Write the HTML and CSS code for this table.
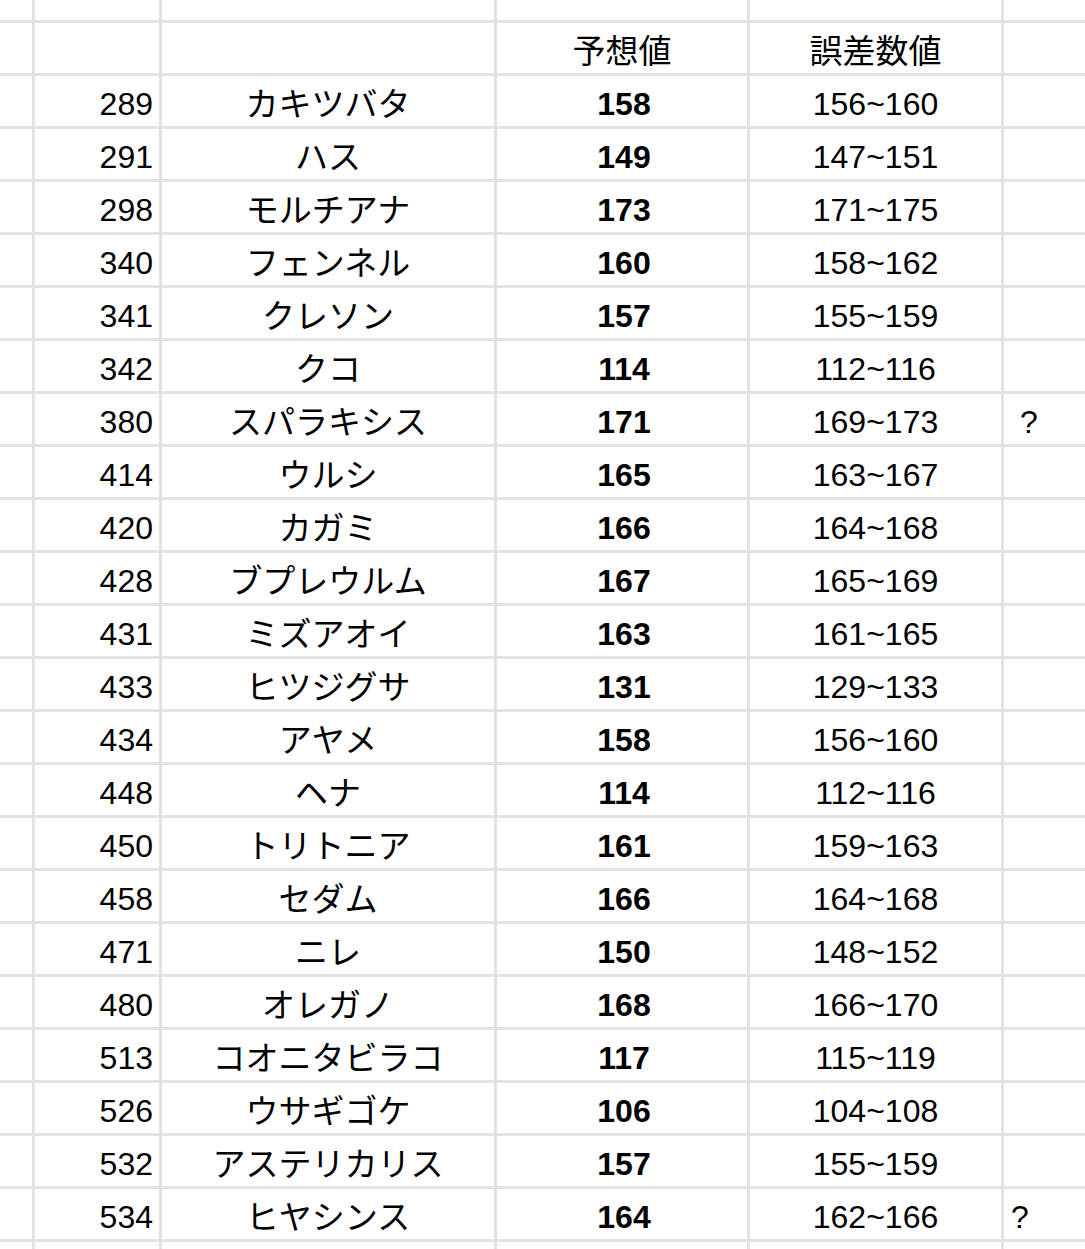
FILE: index.html
```html
<!DOCTYPE html>
<html lang="ja">
<head>
<meta charset="utf-8">
<title>予想値</title>
<link rel="stylesheet" href="styles.css">
</head>
<body>
<div class="sheet">
  <div class="c top"></div><div class="c top"></div><div class="c top"></div><div class="c top"></div><div class="c top"></div><div class="c top"></div>

  <div class="c"></div><div class="c"></div><div class="c"></div>
  <div class="c mid jp">予想値</div><div class="c mid jp">誤差数値</div><div class="c"></div>

  <div class="c"></div><div class="c num">289</div><div class="c mid jp">カキツバタ</div><div class="c mid b">158</div><div class="c mid">156~160</div><div class="c"></div>
  <div class="c"></div><div class="c num">291</div><div class="c mid jp">ハス</div><div class="c mid b">149</div><div class="c mid">147~151</div><div class="c"></div>
  <div class="c"></div><div class="c num">298</div><div class="c mid jp">モルチアナ</div><div class="c mid b">173</div><div class="c mid">171~175</div><div class="c"></div>
  <div class="c"></div><div class="c num">340</div><div class="c mid jp">フェンネル</div><div class="c mid b">160</div><div class="c mid">158~162</div><div class="c"></div>
  <div class="c"></div><div class="c num">341</div><div class="c mid jp">クレソン</div><div class="c mid b">157</div><div class="c mid">155~159</div><div class="c"></div>
  <div class="c"></div><div class="c num">342</div><div class="c mid jp">クコ</div><div class="c mid b">114</div><div class="c mid">112~116</div><div class="c"></div>
  <div class="c"></div><div class="c num">380</div><div class="c mid jp">スパラキシス</div><div class="c mid b">171</div><div class="c mid">169~173</div><div class="c note"> ?</div>
  <div class="c"></div><div class="c num">414</div><div class="c mid jp">ウルシ</div><div class="c mid b">165</div><div class="c mid">163~167</div><div class="c"></div>
  <div class="c"></div><div class="c num">420</div><div class="c mid jp">カガミ</div><div class="c mid b">166</div><div class="c mid">164~168</div><div class="c"></div>
  <div class="c"></div><div class="c num">428</div><div class="c mid jp">ブプレウルム</div><div class="c mid b">167</div><div class="c mid">165~169</div><div class="c"></div>
  <div class="c"></div><div class="c num">431</div><div class="c mid jp">ミズアオイ</div><div class="c mid b">163</div><div class="c mid">161~165</div><div class="c"></div>
  <div class="c"></div><div class="c num">433</div><div class="c mid jp">ヒツジグサ</div><div class="c mid b">131</div><div class="c mid">129~133</div><div class="c"></div>
  <div class="c"></div><div class="c num">434</div><div class="c mid jp">アヤメ</div><div class="c mid b">158</div><div class="c mid">156~160</div><div class="c"></div>
  <div class="c"></div><div class="c num">448</div><div class="c mid jp">ヘナ</div><div class="c mid b">114</div><div class="c mid">112~116</div><div class="c"></div>
  <div class="c"></div><div class="c num">450</div><div class="c mid jp">トリトニア</div><div class="c mid b">161</div><div class="c mid">159~163</div><div class="c"></div>
  <div class="c"></div><div class="c num">458</div><div class="c mid jp">セダム</div><div class="c mid b">166</div><div class="c mid">164~168</div><div class="c"></div>
  <div class="c"></div><div class="c num">471</div><div class="c mid jp">ニレ</div><div class="c mid b">150</div><div class="c mid">148~152</div><div class="c"></div>
  <div class="c"></div><div class="c num">480</div><div class="c mid jp">オレガノ</div><div class="c mid b">168</div><div class="c mid">166~170</div><div class="c"></div>
  <div class="c"></div><div class="c num">513</div><div class="c mid jp">コオニタビラコ</div><div class="c mid b">117</div><div class="c mid">115~119</div><div class="c"></div>
  <div class="c"></div><div class="c num">526</div><div class="c mid jp">ウサギゴケ</div><div class="c mid b">106</div><div class="c mid">104~108</div><div class="c"></div>
  <div class="c"></div><div class="c num">532</div><div class="c mid jp">アステリカリス</div><div class="c mid b">157</div><div class="c mid">155~159</div><div class="c"></div>
  <div class="c"></div><div class="c num">534</div><div class="c mid jp">ヒヤシンス</div><div class="c mid b">164</div><div class="c mid">162~166</div><div class="c note">?</div>

  <div class="c"></div><div class="c"></div><div class="c"></div><div class="c"></div><div class="c"></div><div class="c"></div>
</div>
</body>
</html>
```

FILE: styles.css
```css
html, body {
  margin: 0;
  padding: 0;
  overflow: hidden;
  background: #ffffff;
}

.sheet {
  display: grid;
  grid-template-columns: 32px 124px 332px 250px 251px 1fr;
  grid-template-rows: 20px repeat(24, 50px);
  gap: 3px;
  background: #e2e2e2;
  width: 1085px;
  height: 1249px;
  overflow: hidden;
  font-family: "Liberation Sans", "Noto Sans CJK JP", sans-serif;
  font-size: 32px;
  line-height: 32px;
  color: #000000;
}

.c {
  background: #ffffff;
  display: flex;
  align-items: flex-end;
  padding: 0 6px 6px 6px;
  white-space: pre;
  overflow: hidden;
}

.top {
  padding: 0;
}

.num {
  justify-content: flex-end;
}

.mid {
  justify-content: center;
}

.jp {
  font-size: 33px;
  padding-bottom: 5px;
}

.b {
  font-weight: bold;
  padding-left: 10px;
}

.note {
  justify-content: flex-start;
  padding-left: 7px;
}
```
